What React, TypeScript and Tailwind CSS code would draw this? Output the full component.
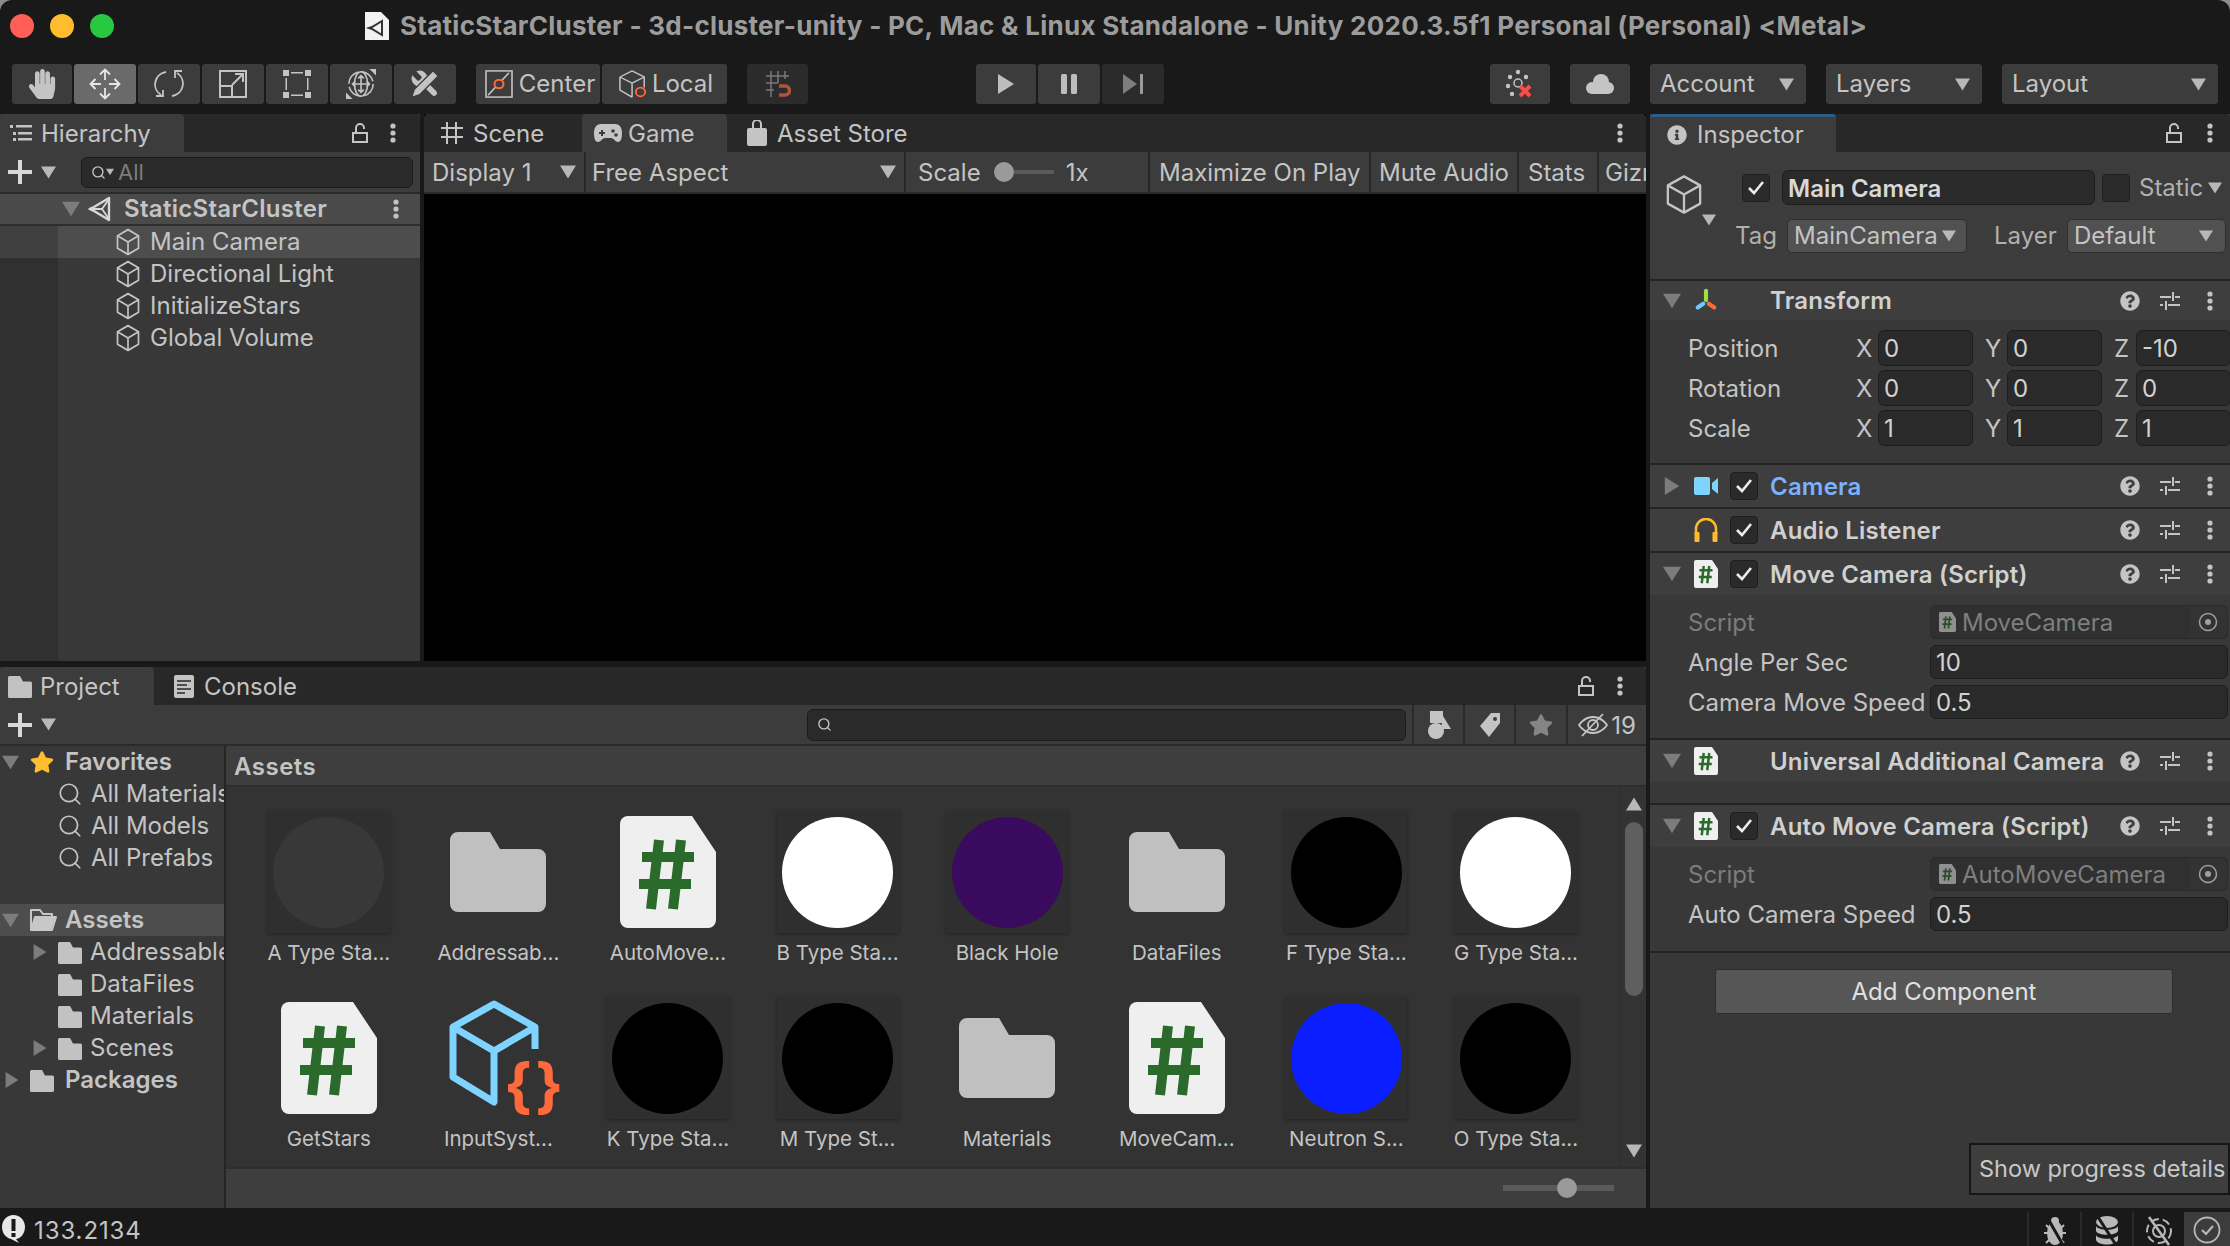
import React from "react";
import { Search } from "lucide-react";
import { FaHandPaper, FaQuestionCircle, FaStar, FaInfoCircle } from "react-icons/fa";

const C = "#c4c4c4";

function Tri({ dir = "down", size = 16, color = "#b8b8b8" }: { dir?: "down" | "right" | "up"; size?: number; color?: string }) {
  const pts = dir === "down" ? "0,1 10,1 5,9" : dir === "up" ? "0,9 10,9 5,1" : "1,0 9,5 1,10";
  return (
    <svg width={size} height={size} viewBox="0 0 10 10" className="shrink-0">
      <polygon points={pts} fill={color} />
    </svg>
  );
}

function Dots() {
  return (
    <svg width="6" height="20" viewBox="0 0 6 20" className="shrink-0">
      <circle cx="3" cy="3" r="2.600" fill={C} />
      <circle cx="3" cy="10" r="2.600" fill={C} />
      <circle cx="3" cy="17" r="2.600" fill={C} />
    </svg>
  );
}

function Lock() {
  return (
    <svg width="18" height="22" viewBox="0 0 18 22" fill="none" stroke={C} strokeWidth="2" className="shrink-0">
      <rect x="2" y="11" width="14" height="9" />
      <path d="M5 11V6a4 4 0 0 1 8 0v1" />
    </svg>
  );
}

function Cube({ size = 26, tall = 28, color = C, sw = 1.7 }: { size?: number; tall?: number; color?: string; sw?: number }) {
  return (
    <svg width={size} height={tall} viewBox="0 0 26 26" preserveAspectRatio="none" fill="none" stroke={color} strokeWidth={sw} strokeLinejoin="round" className="shrink-0">
      <path d="M13 1.500 23.500 7.200v11.600L13 24.500 2.500 18.800V7.200z" />
      <path d="M2.500 7.200 13 13l10.500-5.800M13 13v11.500" />
    </svg>
  );
}

function UnityLogo({ size = 26 }: { size?: number }) {
  return (
    <svg width={size} height={size} viewBox="0 0 26 26" className="shrink-0" fill="none" stroke="#d8d8d8" strokeWidth="2.400" strokeLinejoin="round">
      <path d="M21 2 6 11 1.500 13 6 15l15 9V2z" />
      <path d="M21 3 14 13l7 10M3 13h11" strokeWidth="1.800" />
    </svg>
  );
}

function Folder({ w = 24, h = 24 }: { w?: number; h?: number }) {
  return (
    <svg width={w} height={h} viewBox="0 0 24 24" className="shrink-0">
      <path d="M1.500 2H12l3 5.500h7.500A1.500 1.500 0 0 1 24 9v13.500a1.500 1.500 0 0 1-1.500 1.500h-21A1.500 1.500 0 0 1 0 22.500v-19A1.500 1.500 0 0 1 1.500 2z" fill="#c2c2c2" />
    </svg>
  );
}

function BigFolder() {
  return (
    <svg width="96" height="80" viewBox="0 0 96 80" className="shrink-0">
      <path d="M8 0H40l10 17h38a8 8 0 0 1 8 8v47a8 8 0 0 1-8 8H8a8 8 0 0 1-8-8V8a8 8 0 0 1 8-8z" fill="#c0c0c0" />
    </svg>
  );
}

function OpenFolder() {
  return (
    <svg width="27" height="24" viewBox="0 0 27 24" className="shrink-0">
      <path d="M1 22V2h9l3 4h9v3M1 22l4-13h21l-4 13z" fill="none" stroke="#c8c8c8" strokeWidth="2" strokeLinejoin="round" />
      <path d="M5 10h20l-3.500 11H2z" fill="#c8c8c8" />
    </svg>
  );
}

function Doc({ w = 24, h = 28, opacity = 1 }: { w?: number; h?: number; opacity?: number }) {
  return (
    <svg width={w} height={h} viewBox="0 0 96 112" className="shrink-0" opacity={opacity}>
      <path d="M8 0H72L96 36V104a8 8 0 0 1-8 8H8a8 8 0 0 1-8-8V8a8 8 0 0 1 8-8z" fill="#efefef" />
      <g stroke="#2a6a2a" strokeWidth="10" fill="none">
        <path d="M22 41H74M19 68H71M39 24 31 93M61 24 53 93" />
      </g>
    </svg>
  );
}

function Sliders() {
  return (
    <svg width="20" height="20" viewBox="0 0 20 20" stroke={C} strokeWidth="2" fill="none" className="block">
      <path d="M0 6h11M15 6h5M13 1v9M0 14h3M8 14h12M6 10v9" />
    </svg>
  );
}

function HelpIcons() {
  return (
    <div className="ml-auto flex items-center shrink-0">
      <FaQuestionCircle size={20} color={C} />
      <div className="ml-[20px]"><Sliders /></div>
      <div className="ml-[27px] mr-[17px]"><Dots /></div>
    </div>
  );
}

function Check({ on = true, className = "" }: { on?: boolean; className?: string }) {
  return (
    <div className={`w-[28px] h-[28px] shrink-0 rounded-[4px] bg-[#2a2a2a] border border-[#1f1f1f] flex items-center justify-center ${className}`}>
      {on && (
        <svg width="18" height="16" viewBox="0 0 18 16" fill="none" stroke="#ececec" strokeWidth="2.600">
          <path d="M2 8l5 5L16 2" />
        </svg>
      )}
    </div>
  );
}

function TB({ w, active, dark, children, className = "" }: { w: string; active?: boolean; dark?: boolean; children: React.ReactNode; className?: string }) {
  return (
    <div className={`${w} h-10 shrink-0 rounded-[3px] flex items-center justify-center ${active ? "bg-[#6a6a6a]" : dark ? "bg-[#2b2b2b]" : "bg-[#3c3c3c]"} ${className}`}>
      {children}
    </div>
  );
}

const MoveIcon = (
  <svg width="32" height="32" viewBox="0 0 32 32" fill="none" stroke="#e8e8e8" strokeWidth="1.800" strokeLinejoin="miter">
    <path d="M16 2v10M16 20v10M2 16h10M20 16h10" />
    <path d="M11 6.500 16 1.500l5 5M11 25.500l5 5 5-5M6.500 11 1.500 16l5 5M25.500 11l5 5-5 5" />
  </svg>
);
const RotateIcon = (
  <svg width="30" height="30" viewBox="0 0 30 30" fill="none" stroke={C} strokeWidth="1.800">
    <path d="M12 3A12.500 12.500 0 0 0 7 26" />
    <path d="M18 27A12.500 12.500 0 0 0 23 4" />
    <path d="M2 27h7v-6M21 9V2h7" />
  </svg>
);
const ScaleIcon = (
  <svg width="28" height="28" viewBox="0 0 28 28" fill="none" stroke={C} strokeWidth="2">
    <rect x="1" y="1" width="26" height="26" />
    <rect x="1" y="16" width="12" height="11" />
    <path d="M13 15 23 5M16 4h8v8" />
  </svg>
);
const RectIcon = (
  <svg width="28" height="28" viewBox="0 0 28 28" fill={C} stroke="none">
    <rect x="0" y="0" width="6" height="6" />
    <rect x="22" y="0" width="6" height="6" />
    <rect x="0" y="22" width="6" height="6" />
    <rect x="22" y="22" width="6" height="6" />
    <path d="M8 2h12v1.500H8zM8 24.500h12V26H8zM2.500 8H4v12H2.500zM24 8h1.500v12H24z" />
  </svg>
);
const TransformIcon = (
  <svg width="30" height="30" viewBox="0 0 32 32" fill="none" stroke={C} strokeWidth="1.700">
    <circle cx="16" cy="16" r="13" strokeDasharray="17 3.400" />
    <ellipse cx="16" cy="16" rx="7" ry="13" />
    <path d="M16 7v18M7 16h18M13 10l3-3 3 3M13 22l3 3 3-3M10 13l-3 3 3 3M22 13l3 3-3 3" />
    <path d="M25 0h7v7zM0 32v-7l7 7z" fill={C} stroke="none" />
  </svg>
);
const ToolsIcon = (
  <svg width="32" height="32" viewBox="0 0 24 24" fill={C}>
    <path d="M9.300 6.300a1 1 0 0 1 0 1.400L7.700 9.300a1 1 0 0 1-1.400 0L2.500 5.500a6 6 0 0 0 7.900 7.900l6.900 6.900a2.100 2.100 0 0 0 3-3l-6.900-6.900a6 6 0 0 0-7.900-7.900z" />
    <path d="M18 2l4 4L8 20l-6 2 2-6z" stroke="#3c3c3c" strokeWidth="1" />
  </svg>
);
const PivotCenter = (
  <svg width="28" height="28" viewBox="0 0 28 30" preserveAspectRatio="none" fill="none" className="shrink-0">
    <rect x="1" y="1" width="26" height="28" stroke={C} strokeWidth="1.600" />
    <path d="M3 27 24 3" stroke={C} strokeWidth="1.600" />
    <circle cx="14" cy="15" r="4.500" stroke="#ff6a3d" strokeWidth="2" fill="#3c3c3c" />
  </svg>
);
const PivotLocal = (
  <svg width="28" height="28" viewBox="0 0 30 32" preserveAspectRatio="none" fill="none" className="shrink-0">
    <path d="M14 1 27 8v12M1 8l13-7M1 8v15l13 8M1 8l13 7v16M14 15l13-7" stroke={C} strokeWidth="1.600" />
    <circle cx="23" cy="25" r="5" stroke="#ff6a3d" strokeWidth="2" fill="#3c3c3c" />
  </svg>
);
const SnapIcon = (
  <svg width="26" height="27" viewBox="0 0 26 27" fill="none" stroke="#7a7a7a" strokeWidth="1.500">
    <path d="M6 0v26M13 0v12M20 0v8M1 5h23M1 12h12M1 19h8" />
    <path d="M14 15h6a4.500 4.500 0 0 1 0 9h-6" stroke="#b0533a" strokeWidth="3.500" />
  </svg>
);

function Pop({ w, label, className = "" }: { w: string; label: string; className?: string }) {
  return (
    <div className={`${w} h-10 shrink-0 rounded-[3px] bg-[#3c3c3c] flex items-center pl-[10px] pr-[12px] justify-between ${className}`}>
      <span>{label}</span>
      <Tri size={15} />
    </div>
  );
}

function Toolbar() {
  return (
    <div className="h-[50px] shrink-0 flex items-start pl-[12px]">
      <div className="flex gap-[2px]">
        <TB w="w-[60px]"><FaHandPaper size={30} color={C} /></TB>
        <TB w="w-[62px]" active>{MoveIcon}</TB>
        <TB w="w-[62px]">{RotateIcon}</TB>
        <TB w="w-[62px]">{ScaleIcon}</TB>
        <TB w="w-[62px]">{RectIcon}</TB>
        <TB w="w-[62px]">{TransformIcon}</TB>
        <TB w="w-[62px]">{ToolsIcon}</TB>
      </div>
      <div className="flex gap-[2px] ml-[20px]">
        <TB w="w-[124px]" className="gap-[6px] pl-[4px]">{PivotCenter}<span>Center</span></TB>
        <TB w="w-[125px]" className="gap-[5px] pl-[3px]">{PivotLocal}<span>Local</span></TB>
      </div>
      <TB w="w-[61px]" dark className="ml-[20px]">{SnapIcon}</TB>
      <div className="flex gap-[2px] ml-[168px]">
        <TB w="w-[60px]">
          <svg width="16" height="20" viewBox="0 0 16 20"><polygon points="0,0 16,10 0,20" fill="#bdbdbd" /></svg>
        </TB>
        <TB w="w-[62px]">
          <svg width="16" height="20" viewBox="0 0 16 20" fill="#bdbdbd"><rect x="0" y="0" width="6" height="20" rx="1.500" /><rect x="10" y="0" width="6" height="20" rx="1.500" /></svg>
        </TB>
        <TB w="w-[62px]" dark>
          <svg width="20" height="20" viewBox="0 0 20 20"><polygon points="0,0 14,10 0,20" fill="#7d7d7d" /><rect x="17" y="0" width="3" height="20" fill="#9a9a9a" /></svg>
        </TB>
      </div>
      <TB w="w-[60px]" className="ml-[326px]">
        <svg width="28" height="30" viewBox="0 0 28 30" fill={C}>
          <circle cx="12" cy="3" r="2.200" /><circle cx="4" cy="8" r="2.200" /><circle cx="20" cy="8" r="2.200" /><circle cx="2" cy="17" r="2.200" /><circle cx="6" cy="25" r="2.200" />
          <circle cx="12" cy="14" r="4" fill="none" stroke={C} strokeWidth="1.500" />
          <path d="M14 17l10 10M24 17 14 27" stroke="#ff4a4a" strokeWidth="4" />
        </svg>
      </TB>
      <TB w="w-[60px]" className="ml-[20px]">
        <svg width="28" height="20" viewBox="0 0 28 20" fill={C}>
          <circle cx="15" cy="8" r="8" /><circle cx="6" cy="14" r="6" /><circle cx="22" cy="14" r="6" /><rect x="6" y="12" width="16" height="8" />
        </svg>
      </TB>
      <Pop w="w-[156px]" label="Account" className="ml-[20px]" />
      <Pop w="w-[156px]" label="Layers" className="ml-[20px]" />
      <Pop w="w-[216px]" label="Layout" className="ml-[20px]" />
    </div>
  );
}

function Strip({ children }: { children: React.ReactNode }) {
  return <div className="h-[38px] shrink-0 bg-[#282828] rounded-t-[4px] flex items-stretch">{children}</div>;
}

function ListIcon() {
  return (
    <svg width="22" height="18" viewBox="0 0 22 18" fill={C}>
      <rect x="0" y="1" width="3" height="3" /><rect x="6" y="1" width="16" height="2.500" />
      <rect x="3" y="8" width="3" height="3" /><rect x="8" y="8" width="14" height="2.500" />
      <rect x="3" y="14" width="3" height="3" /><rect x="8" y="14" width="14" height="2.500" />
    </svg>
  );
}

function Plus() {
  return (
    <div className="flex items-center shrink-0">
      <svg width="24" height="24" viewBox="0 0 24 24" fill="#d8d8d8"><rect x="10" y="0" width="4" height="24" /><rect x="0" y="10" width="24" height="4" /></svg>
      <div className="ml-[9px]"><Tri size={15} /></div>
    </div>
  );
}

function Hierarchy() {
  return (
    <div className="w-[420px] h-full shrink-0 flex flex-col bg-[#383838]">
      <Strip>
        <div className="w-[184px] bg-[#3c3c3c] rounded-t-[4px] flex items-center pl-[10px] gap-[9px]"><ListIcon /><span className="pt-[2px]">Hierarchy</span></div>
        <div className="ml-auto flex items-center gap-[21px] pr-[24px]"><Lock /><Dots /></div>
      </Strip>
      <div className="h-[42px] shrink-0 bg-[#3c3c3c] border-b-2 border-[#2a2a2a] flex items-center pl-[8px]">
        <Plus />
        <div className="ml-[25px] w-[332px] h-[31px] rounded-[6px] bg-[#2a2a2a] border border-[#1c1c1c] flex items-center pl-[9px] text-[#7c7c7c]">
          <Search size={15} strokeWidth={2.200} color={C} />
          <Tri size={8} />
          <span className="ml-[4px] text-[22px]">All</span>
        </div>
      </div>
      <div className="h-[32px] shrink-0 flex items-center bg-[#4a4a4a] border-b-2 border-[#2e2e2e] pl-[62px] pr-[21px]">
        <Tri size={18} color="#7c7c7c" />
        <div className="ml-[8px]"><UnityLogo /></div>
        <span className="ml-[10px] font-semibold tracking-[0.3px]">StaticStarCluster</span>
        <div className="ml-auto"><Dots /></div>
      </div>
      <div className="flex-1 flex min-h-0">
        <div className="w-[58px] shrink-0 bg-[#303030]"><div className="h-[32px] bg-[#404040]" /></div>
        <div className="flex-1 flex flex-col">
          {["Main Camera", "Directional Light", "InitializeStars", "Global Volume"].map((t, i) => (
            <div key={t} className={`h-[32px] flex items-center pl-[57px] gap-[9px] ${i === 0 ? "bg-[#4d4d4d]" : ""}`}>
              <Cube />
              <span>{t}</span>
            </div>
          ))}
        </div>
      </div>
    </div>
  );
}

function Game() {
  return (
    <div className="flex-1 h-full flex flex-col bg-black min-w-0">
      <Strip>
        <div className="w-[158px] flex items-center pl-[17px] gap-[10px]">
          <svg width="22" height="22" viewBox="0 0 22 22" stroke={C} strokeWidth="2"><path d="M6 0v22M15 0v22M0 6h22M0 15h22" /></svg>
          <span className="pt-[2px]">Scene</span>
        </div>
        <div className="w-[145px] bg-[#3c3c3c] rounded-t-[4px] flex items-center pl-[12px] gap-[6px]">
          <svg width="28" height="20" viewBox="0 0 28 20"><path d="M7 1h14c4 0 7 3 7 9 0 5-1 9-4 9-3 0-4-4-7-4h-6c-3 0-4 4-7 4-3 0-4-4-4-9 0-6 3-9 7-9z" fill={C} /><path d="M5 10h6M8 7v6" stroke="#3c3c3c" strokeWidth="2" /><circle cx="19" cy="8" r="1.800" fill="#3c3c3c" /><circle cx="22" cy="12" r="1.800" fill="#3c3c3c" /></svg>
          <span className="pt-[2px]">Game</span>
        </div>
        <div className="flex items-center pl-[20px] gap-[10px]">
          <svg width="20" height="26" viewBox="0 0 20 26"><path d="M2 8h16a2 2 0 0 1 2 2v14a2 2 0 0 1-2 2H2a2 2 0 0 1-2-2V10a2 2 0 0 1 2-2z" fill={C} /><path d="M6 11V4a4 4 0 0 1 8 0v7" fill="none" stroke={C} strokeWidth="2" /></svg>
          <span className="pt-[2px]">Asset Store</span>
        </div>
        <div className="ml-auto flex items-center pr-[23px]"><Dots /></div>
      </Strip>
      <div className="h-[42px] shrink-0 bg-[#282828] border-b-2 border-[#2a2a2a] flex gap-[2px] overflow-hidden">
        <div className="w-[160px] shrink-0 bg-[#3c3c3c] flex items-center justify-between pl-[8px] pr-[8px]"><span className="pt-[2px]">Display 1</span><Tri size={16} /></div>
        <div className="w-[318px] shrink-0 bg-[#3c3c3c] flex items-center justify-between pl-[6px] pr-[8px]"><span className="pt-[2px]">Free Aspect</span><Tri size={16} /></div>
        <div className="w-[242px] shrink-0 bg-[#3c3c3c] flex items-center pl-[12px]">
          <span className="pt-[2px]">Scale</span>
          <div className="ml-[13px] w-[20px] h-[20px] rounded-full bg-[#9a9a9a] shrink-0" />
          <div className="w-[40px] h-[4px] bg-[#5a5a5a] shrink-0" />
          <span className="ml-[12px] pt-[2px]">1x</span>
        </div>
        <div className="w-[219px] shrink-0 bg-[#3c3c3c] flex items-center pl-[9px] pt-[2px]">Maximize On Play</div>
        <div className="w-[146px] shrink-0 bg-[#3c3c3c] flex items-center pl-[8px] pt-[2px]">Mute Audio</div>
        <div className="w-[78px] shrink-0 bg-[#3c3c3c] flex items-center pl-[9px] pt-[2px]">Stats</div>
        <div className="flex-1 bg-[#3c3c3c] flex items-center pl-[6px] pt-[2px] overflow-hidden">Gizmos</div>
      </div>
      <div className="flex-1 bg-black" />
    </div>
  );
}

function Mag() {
  return <Search size={26} strokeWidth={1.600} color={C} className="shrink-0" />;
}

function TreeRow({ children, bold, cls = "" }: { children: React.ReactNode; bold?: boolean; cls?: string }) {
  return <div className={`h-[32px] flex items-center whitespace-nowrap ${bold ? "font-semibold" : ""} ${cls}`}>{children}</div>;
}

function Thumb({ color }: { color: string }) {
  return (
    <div className="w-[122px] h-[122px] bg-[#2f2f2f] shadow-[0_1px_3px_#222] flex items-center justify-center">
      <div className="w-[111px] h-[111px] rounded-full" style={{ background: color }} />
    </div>
  );
}

function InputSysIcon() {
  return (
    <svg width="122" height="122" viewBox="0 0 122 122" fill="none" className="overflow-visible">
      <path d="M98 52V30L57 7 16 30V80L57 105V54L16 30M57 54 98 30" stroke="#7fd4ff" strokeWidth="7" strokeLinejoin="round" />
      <text x="67" y="110" fontFamily="Inter, sans-serif" fontWeight="700" fontSize="60" letterSpacing="3" fill="#ff6a3d">{"{}"}</text>
    </svg>
  );
}

type Asset = { n: string; k: "c" | "f" | "d" | "i"; color?: string };
const assets: Asset[] = [
  { n: "A Type Sta...", k: "c", color: "#383838" },
  { n: "Addressab...", k: "f" },
  { n: "AutoMove...", k: "d" },
  { n: "B Type Sta...", k: "c", color: "#ffffff" },
  { n: "Black Hole", k: "c", color: "#3a0a5e" },
  { n: "DataFiles", k: "f" },
  { n: "F Type Sta...", k: "c", color: "#000000" },
  { n: "G Type Sta...", k: "c", color: "#ffffff" },
  { n: "GetStars", k: "d" },
  { n: "InputSyst...", k: "i" },
  { n: "K Type Sta...", k: "c", color: "#000000" },
  { n: "M Type St...", k: "c", color: "#000000" },
  { n: "Materials", k: "f" },
  { n: "MoveCam...", k: "d" },
  { n: "Neutron S...", k: "c", color: "#0a1eff" },
  { n: "O Type Sta...", k: "c", color: "#000000" },
];

function Project() {
  return (
    <div className="flex-1 min-h-0 flex flex-col bg-[#383838]">
      <Strip>
        <div className="w-[154px] bg-[#3c3c3c] rounded-t-[4px] flex items-center pl-[8px] gap-[8px]">
          <Folder w={24} h={24} /><span className="pt-[2px]">Project</span>
        </div>
        <div className="flex items-center pl-[20px] gap-[10px]">
          <svg width="20" height="23" viewBox="0 0 20 23"><rect width="20" height="23" rx="2" fill={C} /><path d="M3 6h14M3 10h10M3 14h14M3 18h8" stroke="#282828" strokeWidth="1.500" /></svg>
          <span className="pt-[2px]">Console</span>
        </div>
        <div className="ml-auto flex items-center gap-[22px] pr-[23px]"><Lock /><Dots /></div>
      </Strip>
      <div className="h-[41px] shrink-0 bg-[#3c3c3c] border-b-2 border-[#2a2a2a] flex items-stretch pl-[8px]">
        <Plus />
        <div className="ml-[751px] self-center w-[599px] h-[32px] rounded-[6px] bg-[#2a2a2a] border border-[#1c1c1c] flex items-center pl-[9px]">
          <Search size={15} strokeWidth={2.200} color={C} />
        </div>
        <div className="ml-[6px] flex-1 flex">
          <div className="w-[51px] border-l-2 border-[#2a2a2a] flex items-center justify-center">
            <svg width="24" height="28" viewBox="0 0 24 28" fill={C}><rect x="3" y="0" width="13" height="12" /><polygon points="16,5 24,18 14,18" /><circle cx="9" cy="20" r="8" /></svg>
          </div>
          <div className="w-[51px] border-l-2 border-[#2a2a2a] flex items-center justify-center">
            <svg width="22" height="24" viewBox="0 0 22 24" fill={C}><path d="M12 0h9v10L10 24 1 13z" /><circle cx="16" cy="6" r="2" fill="#3c3c3c" /></svg>
          </div>
          <div className="w-[52px] border-l-2 border-[#2a2a2a] flex items-center justify-center"><FaStar size={24} color="#858585" /></div>
          <div className="flex-1 border-l-2 border-[#2a2a2a] flex items-center justify-center gap-[3px]">
            <svg width="30" height="24" viewBox="0 0 30 24" fill="none" stroke={C} strokeWidth="1.800"><path d="M1 12s5-8 14-8 14 8 14 8-5 8-14 8-14-8-14-8zM25 1 4 23" /><circle cx="15" cy="12" r="5" /></svg>
            <span className="pt-[2px]">19</span>
          </div>
        </div>
      </div>
      <div className="flex-1 flex min-h-0">
        <div className="w-[224px] shrink-0 overflow-hidden">
          <TreeRow bold cls="pl-[2px]"><Tri size={17} color="#7c7c7c" /><div className="ml-[11px]"><FaStar size={24} color="#ffbe2e" /></div><span className="ml-[11px]">Favorites</span></TreeRow>
          {["All Materials", "All Models", "All Prefabs"].map((t) => (
            <TreeRow key={t} cls="pl-[57px]"><Mag /><span className="ml-[8px]">{t}</span></TreeRow>
          ))}
          <div className="h-[30px]" />
          <TreeRow bold cls="pl-[2px] bg-[#4d4d4d]"><Tri size={17} color="#7c7c7c" /><div className="ml-[11px]"><OpenFolder /></div><span className="ml-[8px]">Assets</span></TreeRow>
          <TreeRow cls="pl-[32px]"><Tri dir="right" size={16} color="#7c7c7c" /><div className="ml-[10px]"><Folder /></div><span className="ml-[8px]">Addressables</span></TreeRow>
          <TreeRow cls="pl-[58px]"><Folder /><span className="ml-[8px]">DataFiles</span></TreeRow>
          <TreeRow cls="pl-[58px]"><Folder /><span className="ml-[8px]">Materials</span></TreeRow>
          <TreeRow cls="pl-[32px]"><Tri dir="right" size={16} color="#7c7c7c" /><div className="ml-[10px]"><Folder /></div><span className="ml-[8px]">Scenes</span></TreeRow>
          <TreeRow bold cls="pl-[4px]"><Tri dir="right" size={16} color="#7c7c7c" /><div className="ml-[10px]"><Folder /></div><span className="ml-[11px]">Packages</span></TreeRow>
        </div>
        <div className="w-[2px] shrink-0 bg-[#252525]" />
        <div className="flex-1 flex flex-col min-w-0">
          <div className="h-[41px] shrink-0 bg-[#3e3e3e] border-b-2 border-[#2e2e2e] flex items-center pl-[8px] pt-[2px] font-semibold tracking-[0.5px]">Assets</div>
          <div className="flex-1 flex min-h-0 bg-[#333333]">
            <div className="flex-1 grid grid-cols-[repeat(8,169.600px)] auto-rows-[186px] pl-[18px] pt-[24px] overflow-hidden">
              {assets.map((a) => (
                <div key={a.n} className="flex flex-col items-center">
                  <div className="w-[122px] h-[122px] flex items-center justify-center">
                    {a.k === "c" && <Thumb color={a.color!} />}
                    {a.k === "f" && <BigFolder />}
                    {a.k === "d" && <Doc w={96} h={112} />}
                    {a.k === "i" && <InputSysIcon />}
                  </div>
                  <div className="mt-[6px] text-[20.500px] leading-[28px] whitespace-nowrap">{a.n}</div>
                </div>
              ))}
            </div>
            <div className="w-[26px] shrink-0 border-l border-[#2e2e2e] flex flex-col items-center pt-[9px] pb-[8px]">
              <Tri dir="up" size={16} />
              <div className="mt-[10px] w-[18px] h-[174px] rounded-full bg-[#5f5f5f]" />
              <div className="mt-auto"><Tri size={16} /></div>
            </div>
          </div>
          <div className="h-[41px] shrink-0 bg-[#3e3e3e] border-t-2 border-[#2e2e2e] flex items-center justify-end pr-[32px] pb-[2px]">
            <div className="w-[111px] h-[6px] bg-[#5a5a5a] flex items-center">
              <div className="ml-[54px] w-[20px] h-[20px] rounded-full bg-[#9a9a9a] shrink-0" />
            </div>
          </div>
        </div>
      </div>
    </div>
  );
}

function Field({ v, cls = "" }: { v: string; cls?: string }) {
  return (
    <div className={`rounded-[6px] bg-[#2a2a2a] border border-[#1e1e1e] flex items-center pl-[5px] pt-[2px] text-[#d2d2d2] ${cls}`}>{v}</div>
  );
}

function Header({ arrow, icon, check, title, blue, h = "h-[44px]" }: { arrow?: "down" | "right"; icon: React.ReactNode; check?: boolean; title: string; blue?: boolean; h?: string }) {
  return (
    <div className={`${h} shrink-0 bg-[#3e3e3e] border-t-2 border-[#232323] flex items-center`}>
      <div className="w-[44px] pl-[13px] shrink-0">{arrow && <Tri dir={arrow} size={18} color="#7c7c7c" />}</div>
      <div className="w-[24px] h-[30px] shrink-0 flex items-center justify-center">{icon}</div>
      <div className="w-[52px] shrink-0 pl-[12px]">{check && <Check />}</div>
      <span className={`font-semibold whitespace-nowrap pt-[1px] tracking-[0.2px] ${blue ? "text-[#7bb2ff]" : "text-[#d0d0d0]"}`}>{title}</span>
      <HelpIcons />
    </div>
  );
}

function PropRow({ label, children, muted }: { label: string; children: React.ReactNode; muted?: boolean }) {
  return (
    <div className="flex items-center h-[34px] pl-[38px]">
      <div className={`w-[242px] shrink-0 whitespace-nowrap pt-[1px] ${muted ? "text-[#7c7c7c]" : ""}`}>{label}</div>
      {children}
    </div>
  );
}

function ScriptField({ v }: { v: string }) {
  return (
    <div className="w-[298px] h-[34px] rounded-[5px] bg-[#303030] border border-[#2a2a2a] flex items-center pl-[8px] text-[#7f7f7f]">
      <Doc w={17} h={20} opacity={0.5} />
      <span className="ml-[6px] pt-[2px]">{v}</span>
      <div className="ml-auto w-[38px] h-full bg-[#333333] flex items-center justify-center rounded-r-[5px]">
        <svg width="20" height="20" viewBox="0 0 20 20" fill="none" stroke="#a0a0a0" strokeWidth="1.500"><circle cx="10" cy="10" r="8.500" /><circle cx="10" cy="10" r="3" fill="#a0a0a0" stroke="none" /></svg>
      </div>
    </div>
  );
}

function XYZ({ label, vals }: { label: string; vals: string[] }) {
  const axes = ["X", "Y", "Z"];
  return (
    <div className="flex items-center h-[36px] pl-[38px]">
      <div className="w-[168px] shrink-0 pt-[2px]">{label}</div>
      {vals.map((v, i) => (
        <div key={i} className={`flex items-center ${i === 0 ? "" : "ml-[12px]"}`}>
          <span className="w-[22px] shrink-0 pt-[2px]">{axes[i]}</span>
          <Field v={v} cls="w-[95px] h-[36px]" />
        </div>
      ))}
    </div>
  );
}

function Inspector() {
  return (
    <div className="w-[580px] h-full shrink-0 flex flex-col bg-[#383838] ml-[4px] relative">
      <div className="h-[38px] shrink-0 bg-[#282828] rounded-t-[4px] flex items-stretch">
        <div className="w-[186px] bg-[#3c3c3c] border-t-[3px] border-[#2c5d87] rounded-t-[4px] flex items-center pl-[17px] gap-[10px]">
          <FaInfoCircle size={20} color={C} /><span>Inspector</span>
        </div>
        <div className="ml-auto flex items-center gap-[24px] pr-[17px]"><Lock /><Dots /></div>
      </div>
      <div className="h-[127px] shrink-0 bg-[#3c3c3c] flex pt-[18px]">
        <div className="w-[85px] shrink-0 pl-[14px] pt-[4px]">
          <Cube size={40} tall={41} sw={1.500} />
          <div className="ml-[38px] -mt-[2px]"><Tri size={14} /></div>
        </div>
        <div className="flex-1 flex flex-col gap-[14px]">
          <div className="flex items-center h-[35px] pl-[7px]">
            <Check />
            <div className="ml-[12px] w-[313px] h-[35px] rounded-[6px] bg-[#2a2a2a] border border-[#1e1e1e] flex items-center pl-[5px] pt-[2px] font-semibold text-[#d8d8d8]">Main Camera</div>
            <Check on={false} className="ml-[7px]" />
            <span className="ml-[9px] pt-[1px] text-[#b0b0b0]">Static</span>
            <div className="ml-[5px]"><Tri size={14} /></div>
          </div>
          <div className="flex items-center h-[34px]">
            <span className="w-[52px] shrink-0 text-[#b0b0b0]">Tag</span>
            <div className="w-[180px] h-[34px] rounded-[5px] bg-[#515151] border border-[#2e2e2e] flex items-center pl-[6px] justify-between pr-[10px]"><span>MainCamera</span><Tri size={14} /></div>
            <span className="ml-[27px] w-[73px] shrink-0 text-[#b0b0b0]">Layer</span>
            <div className="w-[159px] h-[34px] rounded-[5px] bg-[#515151] border border-[#2e2e2e] flex items-center pl-[6px] justify-between pr-[12px]"><span>Default</span><Tri size={14} /></div>
          </div>
        </div>
      </div>
      <Header h="h-[41px]" arrow="down" title="Transform" icon={
        <svg width="26" height="28" viewBox="0 0 26 28" fill="none" strokeWidth="4.500" strokeLinecap="round"><path d="M13 3v10" stroke="#a0e040" /><path d="M10 17l-6 4" stroke="#6fc8ff" /><path d="M16 17l6 4" stroke="#ff6a3d" /></svg>
      } />
      <div className="h-[143px] shrink-0 pt-[10px] flex flex-col gap-[4px]">
        <XYZ label="Position" vals={["0", "0", "-10"]} />
        <XYZ label="Rotation" vals={["0", "0", "0"]} />
        <XYZ label="Scale" vals={["1", "1", "1"]} />
      </div>
      <Header arrow="right" check blue title="Camera" icon={
        <svg width="24" height="18" viewBox="0 0 24 18" fill="#7fd4ff"><rect width="16" height="18" rx="2" /><polygon points="18,6 24,1 24,17 18,12" /></svg>
      } />
      <Header check title="Audio Listener" icon={
        <svg width="24" height="24" viewBox="0 0 24 24" fill="none"><path d="M2 16v-5a10 10 0 0 1 20 0v5" stroke="#ffb92e" strokeWidth="2.600" /><rect x="0.500" y="14" width="5" height="10" rx="1" fill="#ffb92e" /><rect x="18.500" y="14" width="5" height="10" rx="1" fill="#ffb92e" /></svg>
      } />
      <Header arrow="down" check title="Move Camera (Script)" icon={<Doc w={24} h={28} />} />
      <div className="h-[143px] shrink-0 pt-[10px] flex flex-col gap-[6px]">
        <PropRow label="Script" muted><ScriptField v="MoveCamera" /></PropRow>
        <PropRow label="Angle Per Sec"><Field v="10" cls="w-[298px] h-[34px]" /></PropRow>
        <PropRow label="Camera Move Speed"><Field v="0.5" cls="w-[298px] h-[34px]" /></PropRow>
      </div>
      <Header arrow="down" title="Universal Additional Camera" icon={<Doc w={24} h={28} />} />
      <div className="h-[21px] shrink-0" />
      <Header arrow="down" check title="Auto Move Camera (Script)" icon={<Doc w={24} h={28} />} />
      <div className="h-[104px] shrink-0 pt-[10px] flex flex-col gap-[6px]">
        <PropRow label="Script" muted><ScriptField v="AutoMoveCamera" /></PropRow>
        <PropRow label="Auto Camera Speed"><Field v="0.5" cls="w-[298px] h-[34px]" /></PropRow>
      </div>
      <div className="border-t-2 border-[#232323] pt-[16px] flex pl-[65px]">
        <div className="w-[458px] h-[45px] rounded-[3px] bg-[#565656] border border-[#2e2e2e] flex items-center justify-center text-[#e0e0e0]">Add Component</div>
      </div>
      <div className="absolute right-0 bottom-[13px] w-[261px] h-[52px] bg-[#3e3e3e] border-2 border-[#161616] flex items-center pl-[8px] text-[23.500px] text-[#c8c8c8] whitespace-nowrap overflow-hidden">Show progress details</div>
    </div>
  );
}

function StatusBar() {
  return (
    <div className="h-[38px] shrink-0 flex items-stretch overflow-hidden pt-[4px]">
      <div className="flex items-center pl-[1px]">
        <svg width="25" height="30" viewBox="0 0 25 30"><path d="M12.500 1C19 1 24 6 24 13s-5 12-9 12l3 4-8-4C5 24 1 19 1 13 1 6 6 1 12.500 1z" fill="#e8e8e8" /><rect x="10.500" y="5" width="4" height="12" fill="#191919" /><rect x="10.500" y="19" width="4" height="4" fill="#191919" /></svg>
        <span className="ml-[8px] pt-[4px] tracking-[0.9px]">133.2134</span>
      </div>
      <div className="ml-auto flex items-stretch">
        <div className="w-[53px] border-l-2 border-[#2a2a2a] flex items-start pt-[4px] justify-center">
          <svg width="28" height="30" viewBox="0 0 28 30" fill="#b8b8b8"><ellipse cx="14" cy="17" rx="8" ry="12" /><circle cx="14" cy="5" r="4" /><path d="M5 9l4 4M23 9l-4 4M3 17h6M25 17h-6M5 27l4-4M23 27l-4-4" stroke="#b8b8b8" strokeWidth="2" /><path d="M6 1l16 28" stroke="#191919" strokeWidth="3" /></svg>
        </div>
        <div className="w-[52px] border-l-2 border-[#2a2a2a] flex items-start pt-[4px] justify-center">
          <svg width="26" height="30" viewBox="0 0 26 30" fill="#b8b8b8"><ellipse cx="13" cy="6" rx="11" ry="6" /><path d="M2 10c2 5 20 5 22 0v5c-2 5-20 5-22 0zM2 19c2 5 20 5 22 0v5c-2 6-20 6-22 0z" /><path d="M4 1l18 28" stroke="#191919" strokeWidth="3" /></svg>
        </div>
        <div className="w-[52px] border-l-2 border-[#2a2a2a] flex items-start pt-[4px] justify-center">
          <svg width="28" height="30" viewBox="0 0 28 30" fill="none" stroke="#b8b8b8" strokeWidth="2"><circle cx="14" cy="15" r="12" strokeDasharray="8 4" /><circle cx="14" cy="15" r="6" /><path d="M4 1l20 28" strokeWidth="2.500" /></svg>
        </div>
        <div className="w-[46px] bg-[#3c3c3c] flex items-start pt-[4px] justify-center">
          <svg width="28" height="28" viewBox="0 0 28 28" fill="none" stroke="#b8b8b8" strokeWidth="1.800"><circle cx="14" cy="14" r="12.500" /><path d="M9 14l4 4 7-8" strokeWidth="2.200" /></svg>
        </div>
      </div>
    </div>
  );
}

export default function App() {
  return (
    <div className="w-[2230px] h-[1246px] bg-[#8c8c8c] overflow-hidden">
      <div className="w-full h-full bg-[#191919] flex flex-col overflow-hidden font-['Inter',sans-serif] text-[24px] leading-none text-[#c4c4c4] rounded-t-[12px]">
        <div className="h-[64px] shrink-0 flex items-center">
          <div className="flex gap-[16px] pl-[10px] pb-[12px] w-[365px] shrink-0">
            <div className="w-[24px] h-[24px] rounded-full bg-[#ff5f57]" />
            <div className="w-[24px] h-[24px] rounded-full bg-[#febc2e]" />
            <div className="w-[24px] h-[24px] rounded-full bg-[#28c840]" />
          </div>
          <div className="flex items-center pb-[12px] gap-[11px] whitespace-nowrap font-bold text-[26px] tracking-[0.27px] text-[#9c9c9c]">
            <svg width="24" height="28" viewBox="0 0 24 28" className="shrink-0"><path d="M0 0h16l8 8v20H0z" fill="#f2f2f2" /><path d="M17 9 7 15l-3 1 3 1 10 6z" fill="none" stroke="#333" strokeWidth="2" /></svg>
            <span>StaticStarCluster - 3d-cluster-unity - PC, Mac &amp; Linux Standalone - Unity 2020.3.5f1 Personal (Personal) &lt;Metal&gt;</span>
          </div>
        </div>
        <Toolbar />
        <div className="h-[1094px] shrink-0 flex">
          <div className="w-[1646px] shrink-0 flex flex-col gap-[6px]">
            <div className="h-[547px] shrink-0 flex gap-[4px]">
              <Hierarchy />
              <Game />
            </div>
            <Project />
          </div>
          <Inspector />
        </div>
        <StatusBar />
      </div>
    </div>
  );
}
